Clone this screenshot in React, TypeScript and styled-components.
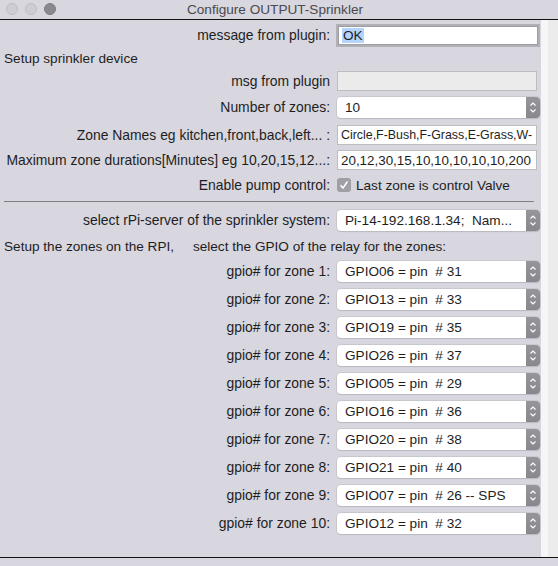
import styled, { createGlobalStyle } from 'styled-components';

const Global = createGlobalStyle`
  html, body {
    margin: 0;
    padding: 0;
    background: #d8d6de;
  }
  body {
    font-family: "Liberation Sans", Arial, sans-serif;
    font-size: 13.6px;
    color: #1e1e1e;
  }
`

const zones = [
  'GPIO06 = pin  # 31',
  'GPIO13 = pin  # 33',
  'GPIO19 = pin  # 35',
  'GPIO26 = pin  # 37',
  'GPIO05 = pin  # 29',
  'GPIO16 = pin  # 36',
  'GPIO20 = pin  # 38',
  'GPIO21 = pin  # 40',
  'GPIO07 = pin  # 26 -- SPS',
  'GPIO12 = pin  # 32',
]

function Stepper(){
  return (
    <StepBox>
      <svg width="14" height="21" viewBox="0 0 14 21">
        <path d="M4.5 8.5 L7 6 L9.5 8.5" fill="none" stroke="#fff" strokeWidth="1.2" />
        <path d="M4.5 12.5 L7 15 L9.5 12.5" fill="none" stroke="#fff" strokeWidth="1.2" />
      </svg>
    </StepBox>
  )
}

function Select({ value }: { value: string }){
  return (
    <SelectBox>
      <SelectText>{value}</SelectText>
      <Stepper />
    </SelectBox>
  )
}

export default function App(){
  return (
    <>
      <Global />
      <Window>
        <TitleBar>
          <Lights>
            <Light />
            <Light />
            <Light $dark />
          </Lights>
          <Title>Configure OUTPUT-Sprinkler</Title>
        </TitleBar>
        <Main>
          <Content>
            <Row $mt={4}>
              <Label>message from plugin:</Label>
              <FocusInput><Selected>OK</Selected></FocusInput>
            </Row>
            <Heading $mt={2}>Setup sprinkler device</Heading>
            <Row $mt={0}>
              <Label>msg from plugin</Label>
              <TextInput $disabled />
            </Row>
            <Row $mt={4}>
              <Label>Number of zones:</Label>
              <Select value="10" />
            </Row>
            <Row $mt={6}>
              <Label>Zone Names eg kitchen,front,back,left... :</Label>
              <TextInput $size={12.4}>Circle,F-Bush,F-Grass,E-Grass,W-</TextInput>
            </Row>
            <Row $mt={3}>
              <Label>Maximum zone durations[Minutes] eg 10,20,15,12...:</Label>
              <TextInput $size={13.4}>20,12,30,15,10,10,10,10,10,200</TextInput>
            </Row>
            <Row $mt={3}>
              <Label>Enable pump control:</Label>
              <CheckRow>
                <Check>
                  <svg width="14" height="14" viewBox="0 0 14 14">
                    <path d="M3.5 7.2 L6 10 L10.5 3.5" fill="none" stroke="#fff" strokeWidth="1.5" />
                  </svg>
                </Check>
                Last zone is control Valve
              </CheckRow>
            </Row>
            <Divider />
            <Row $mt={7}>
              <Label>select rPi-server of the sprinkler system:</Label>
              <Select value="Pi-14-192.168.1.34;  Nam..." />
            </Row>
            <Heading $mt={5}>{'Setup the zones on the RPI,     select the GPIO of the relay for the zones:'}</Heading>
            <ZoneList>
              {zones.map((z, i) => (
                <Row key={i} $mt={0}>
                  <Label>gpio# for zone {i + 1}:</Label>
                  <Select value={z} />
                </Row>
              ))}
            </ZoneList>
          </Content>
          <Track />
        </Main>
        <Footer />
      </Window>
    </>
  )
}

const Window = styled.div`
  display: flex;
  flex-direction: column;
  width: 558px;
  height: 566px;
  background: #d8d6de;
  overflow: hidden;
`

const TitleBar = styled.div`
  position: relative;
  display: flex;
  align-items: center;
  justify-content: center;
  height: 19px;
  border-bottom: 1px solid #111;
  flex-shrink: 0;
`

const Lights = styled.div`
  position: absolute;
  left: 6px;
  top: 3px;
  display: flex;
  gap: 7px;
`

const Light = styled.div<{ $dark?: boolean }>`
  width: 12px;
  height: 12px;
  border-radius: 50%;
  box-sizing: border-box;
  background: ${p => p.$dark ? '#8a898e' : '#cecdd3'};
  border: 1px solid ${p => p.$dark ? '#7e7d82' : '#bfbec4'};
`

const Title = styled.div`
  color: #4a4a4c;
  font-size: 13.6px;
  margin-left: -8px;
`

const Main = styled.div`
  flex: 1;
  display: flex;
  flex-direction: row;
  min-height: 0;
`

const Content = styled.div`
  width: 541px;
  display: flex;
  flex-direction: column;
`

const Track = styled.div`
  flex: 1;
  background: linear-gradient(to right, #f6f6f6 0 7px, #ececec 7px);
`

const Footer = styled.div`
  height: 8px;
  border-top: 1px solid #111;
  flex-shrink: 0;
`

const Row = styled.div<{ $mt: number }>`
  display: grid;
  grid-template-columns: 330px 204px;
  column-gap: 7px;
  align-items: center;
  height: 22px;
  margin-top: ${p => p.$mt}px;
`

const Label = styled.div`
  text-align: right;
  white-space: nowrap;
  font-size: 13.9px;
`

const Heading = styled.div<{ $mt: number }>`
  height: 22px;
  line-height: 22px;
  padding-left: 4px;
  white-space: pre;
  margin-top: ${p => p.$mt}px;
`

const FocusInput = styled.div`
  width: 200px;
  height: 19px;
  box-sizing: border-box;
  background: #fff;
  border: 1px solid #9e9da3;
  box-shadow: 0 0 0 2px #b1b0b6;
  margin-left: 1px;
  display: flex;
  align-items: center;
  padding-left: 3px;
`

const Selected = styled.span`
  background: #b4d4fc;
  line-height: 15px;
  padding: 0 1px;
`

const TextInput = styled.div<{ $disabled?: boolean; $size?: number }>`
  width: 200px;
  height: 20px;
  box-sizing: border-box;
  background: ${p => p.$disabled ? '#ebebeb' : '#fff'};
  border: 1px solid #bdbdbf;
  display: flex;
  align-items: center;
  padding-left: 3px;
  font-size: ${p => p.$size ?? 13}px;
  white-space: nowrap;
  overflow: hidden;
`

const SelectBox = styled.div`
  width: 203px;
  height: 21px;
  box-sizing: border-box;
  display: flex;
  background: #fff;
  border-radius: 4px;
  box-shadow: 0 0 0 0.5px #b8b7bc, 0 1px 1px rgba(0,0,0,0.12);
  overflow: hidden;
`

const SelectText = styled.div`
  flex: 1;
  padding-left: 8px;
  display: flex;
  align-items: center;
  white-space: pre;
  overflow: hidden;
`

const StepBox = styled.div`
  width: 14px;
  height: 21px;
  background: linear-gradient(#96959b, #88878d);
  display: flex;
`

const CheckRow = styled.div`
  display: flex;
  align-items: center;
  gap: 5px;
  white-space: nowrap;
`

const Check = styled.div`
  width: 14px;
  height: 14px;
  border-radius: 3px;
  background: #a09fa5;
  display: flex;
`

const Divider = styled.div`
  height: 1px;
  background: #7f7f82;
  margin: 5px 7px 0 4px;
`

const ZoneList = styled.div`
  display: flex;
  flex-direction: column;
  gap: 6px;
  margin-top: 2px;
`
